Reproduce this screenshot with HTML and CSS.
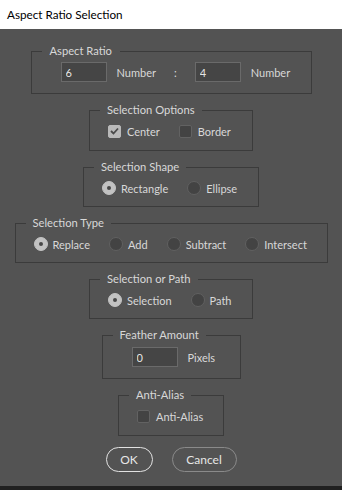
FILE: index.html
```html
<!DOCTYPE html>
<html lang="en">
<head>
    <meta charset="UTF-8">
    <meta name="viewport" content="width=device-width, initial-scale=1.0">
    <title>Aspect Ratio Selection</title>
    <link rel="stylesheet" href="styles.css">
</head>
<body>
    <header class="titlebar">Aspect Ratio Selection</header>

    <main class="dialog">
        <fieldset class="group group-ratio">
            <legend>Aspect Ratio</legend>
            <div class="row row-fields">
                <input class="field" type="text" value="6">
                <span>Number</span>
                <span class="colon">:</span>
                <input class="field" type="text" value="4">
                <span>Number</span>
            </div>
        </fieldset>

        <fieldset class="group group-options">
            <legend>Selection Options</legend>
            <div class="row">
                <label class="choice"><span class="check is-on"><svg width="9" height="8" viewBox="0 0 9 8"><polyline points="1,4 3.5,6.5 8,1.5" fill="none" stroke="#4a4a4a" stroke-width="1.8"/></svg></span>Center</label>
                <label class="choice"><span class="check"></span>Border</label>
            </div>
        </fieldset>

        <fieldset class="group group-shape">
            <legend>Selection Shape</legend>
            <div class="row">
                <label class="choice"><span class="radio is-on"></span>Rectangle</label>
                <label class="choice"><span class="radio"></span>Ellipse</label>
            </div>
        </fieldset>

        <fieldset class="group group-type">
            <legend>Selection Type</legend>
            <div class="row">
                <label class="choice"><span class="radio is-on"></span>Replace</label>
                <label class="choice"><span class="radio"></span>Add</label>
                <label class="choice"><span class="radio"></span>Subtract</label>
                <label class="choice"><span class="radio"></span>Intersect</label>
            </div>
        </fieldset>

        <fieldset class="group group-path">
            <legend>Selection or Path</legend>
            <div class="row">
                <label class="choice"><span class="radio is-on"></span>Selection</label>
                <label class="choice"><span class="radio"></span>Path</label>
            </div>
        </fieldset>

        <fieldset class="group group-feather">
            <legend>Feather Amount</legend>
            <div class="row row-fields">
                <input class="field" type="text" value="0">
                <span>Pixels</span>
            </div>
        </fieldset>

        <fieldset class="group group-alias">
            <legend>Anti-Alias</legend>
            <div class="row">
                <label class="choice"><span class="check"></span>Anti-Alias</label>
            </div>
        </fieldset>

        <div class="buttons">
            <button class="btn btn-ok">OK</button>
            <button class="btn btn-cancel">Cancel</button>
        </div>
    </main>

    <footer class="bottom-strip"></footer>
</body>
</html>
```

FILE: styles.css
```css
body {
    margin: 0;
    height: 100vh;
    display: flex;
    flex-direction: column;
    font-family: Lato, "Open Sans", sans-serif;
    font-size: 11px;
    background-color: #535353;
}

.titlebar {
    height: 29px;
    line-height: 29px;
    padding-left: 7px;
    background-color: #fff;
    color: #000;
    font-size: 11.7px;
}

.dialog {
    flex: 1;
    display: flex;
    flex-direction: column;
    align-items: center;
    gap: 9px;
    padding-top: 15px;
    color: #d8d8d8;
}

.bottom-strip {
    height: 4px;
    background-color: #202020;
}

/* group boxes */

.group {
    box-sizing: border-box;
    margin: 0;
    padding: 0 0 10px;
    min-width: 0;
    border: 1px solid #3b3b3b;
}

.group legend {
    margin-left: 10px;
    padding: 0 7px;
    line-height: 14px;
    font-size: 11.2px;
}

.group-ratio { width: 281px; padding-bottom: 11px; }
.group-options { width: 164px; padding-bottom: 11px; }
.group-shape { width: 176px; }
.group-type { width: 313px; }
.group-path { width: 164px; }
.group-feather { width: 139px; padding-bottom: 11px; }
.group-alias { width: 106px; padding-bottom: 11px; }

.group-ratio legend { padding: 0 8px; }

.row {
    display: flex;
    align-items: center;
    gap: 19px;
    height: 16px;
    margin-top: 6px;
    padding-left: 18px;
}

.row-fields {
    height: 20px;
    gap: 10px;
    padding-left: 29px;
}

.group-ratio .row-fields { margin-top: 4px; }
.group-feather .row-fields { margin-top: 5px; }

.colon {
    margin: 0 8px;
}

.field {
    box-sizing: border-box;
    width: 46px;
    height: 20px;
    padding: 0 4px;
    border: 1px solid #6a6a6a;
    background-color: #454545;
    color: #e4e4e4;
    font: inherit;
}

/* checkboxes and radios */

.choice {
    display: flex;
    align-items: center;
    gap: 5px;
}

.check {
    box-sizing: border-box;
    width: 13px;
    height: 13px;
    margin-right: 1px;
    display: flex;
    align-items: center;
    justify-content: center;
    border: 1px solid #626262;
    border-radius: 2px;
    background-color: #434343;
}

.check.is-on {
    border-color: #b9b9b9;
    background-color: #b9b9b9;
}

.radio {
    box-sizing: border-box;
    width: 14px;
    height: 14px;
    display: flex;
    align-items: center;
    justify-content: center;
    border: 1px solid #606060;
    border-radius: 50%;
    background-color: #434343;
}

.radio.is-on {
    border-color: #c2c2c2;
    background-color: #c2c2c2;
}

.radio.is-on::after {
    content: "";
    width: 4px;
    height: 4px;
    border-radius: 50%;
    background-color: #474747;
}

/* buttons */

.buttons {
    display: flex;
    gap: 19px;
    margin-top: 2px;
}

.btn {
    box-sizing: border-box;
    height: 25px;
    padding: 0;
    border-radius: 13px;
    background: transparent;
    color: #e6e6e6;
    font: inherit;
    font-size: 12px;
}

.btn-ok {
    width: 47px;
    border: 1.5px solid #e2e2e2;
}

.btn-cancel {
    width: 65px;
    border: 1.5px solid #8a8a8a;
}
```
